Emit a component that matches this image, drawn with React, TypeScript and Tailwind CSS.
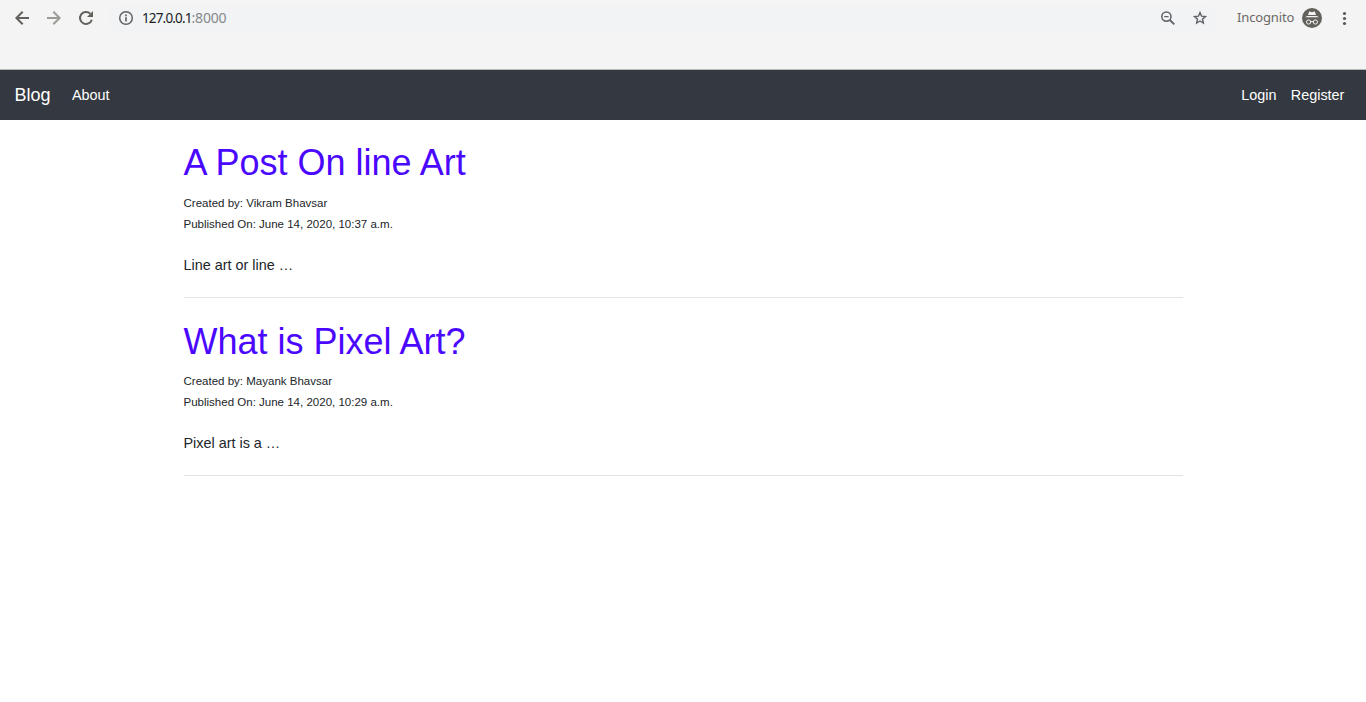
import type { ReactNode } from "react";

interface Post {
  title: string;
  author: string;
  published: string;
  excerpt: string;
}

const posts: Post[] = [
  {
    title: "A Post On line Art",
    author: "Vikram Bhavsar",
    published: "June 14, 2020, 10:37 a.m.",
    excerpt: "Line art or line …",
  },
  {
    title: "What is Pixel Art?",
    author: "Mayank Bhavsar",
    published: "June 14, 2020, 10:29 a.m.",
    excerpt: "Pixel art is a …",
  },
];

function Icon({ children, className = "" }: { children: ReactNode; className?: string }) {
  return (
    <svg
      width="16"
      height="16"
      viewBox="0 0 16 16"
      fill="none"
      stroke="currentColor"
      strokeWidth="2"
      className={className}
      aria-hidden="true"
    >
      {children}
    </svg>
  );
}

function IncognitoIcon() {
  return (
    <svg width="20" height="20" viewBox="0 0 20 20" aria-hidden="true">
      <circle cx="10" cy="10" r="10" fill="#63615c" />
      <path d="M6 7.1 7 3.9Q7.2 3.4 7.8 3.6L10 4.2 12.2 3.6Q12.8 3.4 13 3.9L14 7.1Z" fill="#f4f4f4" />
      <path d="M3 9.3 5.2 8.1h9.6L17 9.3z" fill="#f4f4f4" />
      <g fill="none" stroke="#f4f4f4" strokeWidth="1">
        <circle cx="6.6" cy="14" r="2.1" />
        <circle cx="13.4" cy="14" r="2.1" />
        <path d="M8.7 13.9Q10 13.1 11.3 13.9" />
      </g>
    </svg>
  );
}

function BrowserBar() {
  return (
    <header className="h-[70px] border-b border-[#b9b9b9] bg-[#f4f4f4] font-['Noto_Sans',sans-serif]">
      <div className="flex h-9 items-center pl-[14px] pr-[14px]">
        <div className="flex w-[94px] items-center gap-4 text-[#63615c]">
          <Icon>
            <path d="M15 8H3M8.7 1.7 2.4 8l6.3 6.3" />
          </Icon>
          <Icon className="text-[#9d9b98]">
            <path d="M1 8h12M7.3 1.7 13.6 8l-6.3 6.3" />
          </Icon>
          <Icon>
            <path d="M12.3 3.7A6 6 0 1 0 13.8 9.7" />
            <path d="M15 1v6H9z" fill="currentColor" stroke="none" />
          </Icon>
        </div>
        <div className="flex h-7 w-[1110px] items-center rounded-full bg-[#f1f3f4] pl-[10px] pr-[10px] text-[#5f6368]">
          <Icon>
            <circle cx="8" cy="8" r="6.3" strokeWidth="1.5" />
            <path d="M8 7.2v4.3M8 4.4v1.8" strokeWidth="1.7" />
          </Icon>
          <span className="ml-2 text-[14px] leading-5 tracking-[-0.2px] text-[#84888c]">
            <span className="text-[13.5px] tracking-[-0.85px] text-[#202124]">127.0.0.1</span>:8000
          </span>
          <Icon className="ml-auto">
            <circle cx="6.4" cy="6.6" r="4.6" strokeWidth="1.5" />
            <path d="M4.2 6.6h4.4" strokeWidth="1.2" />
            <path d="m9.8 10 4.5 4.4" strokeWidth="1.8" />
          </Icon>
          <Icon className="ml-4">
            <path
              d="M8 2.5 9.55 6.15 13.5 6.5 10.5 9.1 11.4 13 8 10.95 4.6 13 5.5 9.1 2.5 6.5 6.45 6.15Z"
              strokeWidth="1.4"
            />
          </Icon>
        </div>
        <span className="ml-[19px] w-[65px] pb-[3px] text-[13px] leading-5 tracking-[-0.15px] text-[#6b6965]">
          Incognito
        </span>
        <IncognitoIcon />
        <Icon className="ml-auto text-[#5a5855]">
          <g fill="currentColor" stroke="none">
            <circle cx="8.5" cy="3.5" r="1.6" />
            <circle cx="8.5" cy="8.5" r="1.6" />
            <circle cx="8.5" cy="13.5" r="1.6" />
          </g>
        </Icon>
      </div>
    </header>
  );
}

function Navbar() {
  return (
    <nav className="flex h-[50px] items-center bg-[#343841] pl-[14.4px] pr-[21.6px] text-[14.4px] text-white">
      <a className="mr-[21.6px] text-[18px]">Blog</a>
      <a className="pt-[1.5px]">About</a>
      <a className="ml-auto pt-[1.5px]">Login</a>
      <a className="ml-[14.4px] pt-[1.5px]">Register</a>
    </nav>
  );
}

function PostSummary({ post }: { post: Post }) {
  return (
    <article className="h-[178.2px] border-b border-[#e3e3e3] pt-[21.4px]">
      <h1 className="mb-[8.2px] text-[36px] leading-[43.2px] text-[#4b08ff]">{post.title}</h1>
      <div className="text-[11.52px] leading-[21px]">
        <p>Created by: {post.author}</p>
        <p>Published On: {post.published}</p>
      </div>
      <p className="mt-[20px] leading-[21.6px]">{post.excerpt}</p>
    </article>
  );
}

export default function App() {
  return (
    <div className="h-[702px] overflow-hidden bg-white font-['Liberation_Sans',Arial,sans-serif] text-[14.4px] text-[#212529]">
      <BrowserBar />
      <Navbar />
      <main className="mx-auto w-[999px]">
        {posts.map((post) => (
          <PostSummary key={post.title} post={post} />
        ))}
      </main>
    </div>
  );
}
